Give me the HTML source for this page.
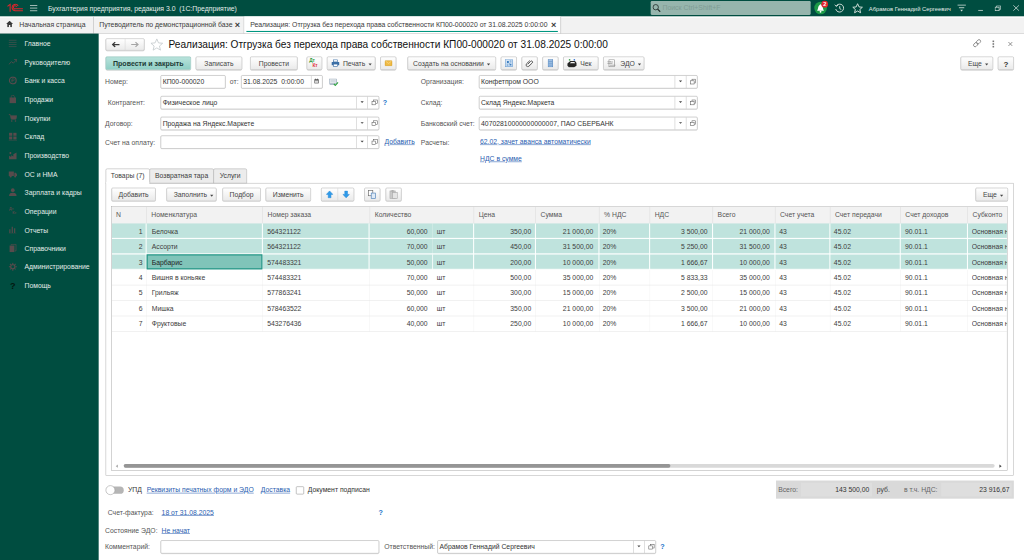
<!DOCTYPE html>
<html lang="ru">
<head>
<meta charset="utf-8">
<title>Реализация: Отгрузка без перехода права собственности КП00-000020</title>
<style>
html,body{margin:0;padding:0;background:#fff;overflow:hidden;width:1024px;height:560px}
#root{position:absolute;left:0;top:0;width:1920px;height:1050px;transform:scale(0.533333);transform-origin:0 0;
 font-family:"Liberation Sans",Arial,sans-serif;font-size:12.800px;color:#333;background:#fff;overflow:hidden}
#root *{box-sizing:border-box}
.a{position:absolute;white-space:nowrap}
/* top bar */
#top{left:0;top:0;width:1920px;height:30.700px;background:#004d40}
#top .t{color:#e3ece8;line-height:32px;top:0;font-size:12.870px}
#search{left:1220px;top:2px;width:300px;height:25.5px;background:#96b5ad;border-radius:2px}
#search span{left:22px;top:0;line-height:25px;color:#7f9c94;font-size:13px}
/* tabs */
#tabs{left:0;top:30.700px;width:1920px;height:32.300px;background:linear-gradient(#fff 0,#fff 1.500px,#f2f2f2 2.500px);border-bottom:1px solid #bcbcbc}
#tabs .t{top:0;line-height:30.500px;color:#3a3a3a;font-size:12.870px}
#tabs .sep{top:0;width:1px;height:32px;background:#b4b4b4}
#tabs .x{top:0;line-height:31.500px;font-size:17px;color:#3a3a3a;font-weight:bold}
#acttab{left:458px;top:0;width:593px;height:31.300px;background:#fff}
#acttab i{position:absolute;left:4px;top:27.500px;width:584px;height:2px;background:#009680}
/* sidebar */
#side{left:0;top:63px;width:185px;height:987px;background:#004d40}
#side .i{left:46px;color:#e3ece8;line-height:16px}
#side svg{position:absolute;left:16.300px;margin-top:-1.200px}
/* form */
.lbl{color:#555;line-height:24px}
.inp{height:25px;border:1px solid #a9a9a9;border-radius:2.500px;background:#fff;line-height:23px;padding-left:3px;color:#333;box-shadow:0 1px 1px rgba(0,0,0,.08)}
.inp .d{position:absolute;top:0;height:23px;width:1px;background:#c4c4c4}
.inp .dd,.inp .op{position:absolute;top:0;height:23px;width:21px;border-left:1px solid #c4c4c4}
.inp .dd:after{content:"";position:absolute;left:7px;top:9px;border-left:3px solid transparent;border-right:3px solid transparent;border-top:3.5px solid #444}
.inp .op:before{content:"";position:absolute;left:10px;top:6px;width:5.800px;height:5.800px;border:1.200px solid #555}
.inp .op:after{content:"";position:absolute;left:7.300px;top:8.700px;width:5.800px;height:5.800px;border:1.200px solid #555;background:#fff}
.btn{height:24.500px;border:1px solid #b2b2b2;border-radius:2.500px;background:linear-gradient(#ffffff,#eaeaea);line-height:25px;text-align:center;color:#444;box-shadow:0 1px 1px rgba(0,0,0,.22)}
.lnk{color:#2a5db0;text-decoration:underline;line-height:24px}
.q{color:#1a73c9;font-weight:bold;line-height:24px;font-size:13.500px}
.arr{display:inline-block;width:0;height:0;border-left:3px solid transparent;border-right:3px solid transparent;border-top:4px solid #444;vertical-align:middle;margin-left:6px}
.ptab{height:28px;line-height:26px;text-align:center;background:#ececec;border:1px solid #aeaeae;border-radius:3px 3px 0 0;color:#3c3c3c}
.ptab.on{background:#fff;height:28px}
.ptab.on:after{content:"";position:absolute;left:0;right:0;bottom:-2px;height:4px;background:#fff}
/* table */
.th{top:388px;height:31px;line-height:29px;color:#555;padding-left:8.500px;border-left:1px solid #dcdcdc;background:#f2f2f2}
.row{left:210px;width:1678px;height:29px}
.row.s{background:#bfe3dd}
.c{top:0;height:29px;line-height:29.500px;color:#3c3c3c}
.r{text-align:right}
</style>
</head>
<body>
<div id="root">

<!-- TOP BAR -->
<div id="top" class="a">
  <svg class="a" style="left:11.500px;top:6px" width="32" height="18" viewBox="0 0 32 18"><g fill="none" stroke="#d8262c" stroke-width="2"><path d="M2 6 L7 2 V16"/><path d="M22 5 A6 6 0 1 0 17 14 H31"/><path d="M19 7 A3 3 0 1 0 17 10.5 H31"/></g></svg>
  <svg class="a" style="left:56px;top:9px" width="15" height="14" viewBox="0 0 15 14"><path d="M0 1.300H14M0 6.200H14M0 11.100H14" stroke="#c9d8d3" stroke-width="1.500"/></svg>
  <div class="a t" style="left:90px">Бухгалтерия предприятия, редакция 3.0&nbsp;&nbsp;(1С:Предприятие)</div>
  <div id="search" class="a">
    <svg class="a" style="left:3px;top:5px" width="16" height="16" viewBox="0 0 16 16"><circle cx="6.500" cy="6.500" r="5" fill="none" stroke="#1f2a27" stroke-width="1.500"/><path d="M10 10L15 15" stroke="#1f2a27" stroke-width="2.200"/></svg>
    <span class="a">Поиск Ctrl+Shift+F</span>
  </div>
  <svg class="a" style="left:1524px;top:0px" width="34" height="30" viewBox="0 0 34 30"><circle cx="14.600" cy="15" r="11.800" fill="#1c9a48"/><path d="M8 20C10.500 17.500 9.500 11 13 9.500C13 7.500 16 7.500 16 9.500C19.500 11 18.500 17.500 21 20Z" fill="#fff"/><circle cx="14.500" cy="22" r="1.700" fill="#fff"/><circle cx="22.300" cy="7.800" r="6.300" fill="#e3262d"/><text x="22.300" y="11.800" font-size="10.500" font-weight="bold" fill="#fff" text-anchor="middle" font-family="Liberation Sans, sans-serif">2</text></svg>
  <svg class="a" style="left:1564px;top:6px" width="20" height="19" viewBox="0 0 20 19"><g fill="none" stroke="#d5e2dd" stroke-width="1.8"><path d="M4 5 A7.5 7.5 0 1 1 3 11"/><path d="M10.5 5.5V10L13.5 12"/><path d="M1 3 L4 6 L7.5 3.5"/></g></svg>
  <svg class="a" style="left:1597px;top:5px" width="22" height="21" viewBox="0 0 22 21"><path d="M11 2 L13.7 8 L20 8.6 L15.2 12.8 L16.7 19 L11 15.6 L5.3 19 L6.8 12.8 L2 8.6 L8.3 8 Z" fill="none" stroke="#d5e2dd" stroke-width="1.8" stroke-linejoin="round"/></svg>
  <div class="a t" style="left:1629px;font-size:11px">Абрамов Геннадий Сергеевич</div>
  <svg class="a" style="left:1795px;top:8px" width="17" height="15" viewBox="0 0 17 15"><path d="M0 1.500H16M3 6.500H13" stroke="#d5e2dd" stroke-width="1.600"/><path d="M5.500 10.500H10.500L8 13.500Z" fill="#d5e2dd"/></svg>
  <svg class="a" style="left:1834px;top:18px" width="10" height="3" viewBox="0 0 10 3"><path d="M0 1.500H9" stroke="#d5e2dd" stroke-width="1.500"/></svg>
  <svg class="a" style="left:1865px;top:10px" width="12" height="11" viewBox="0 0 12 11"><g fill="none" stroke="#d5e2dd" stroke-width="1.300"><rect x="0.800" y="3.500" width="7.500" height="6.500"/><path d="M3.500 3.500V1H11.200V7.500H8.500"/></g></svg>
  <svg class="a" style="left:1899px;top:9px" width="13" height="12" viewBox="0 0 13 12"><path d="M1 1L11.500 11M11.500 1L1 11" stroke="#d5e2dd" stroke-width="1.400"/></svg>
</div>

<!-- TAB BAR -->
<div id="tabs" class="a">
  <svg class="a" style="left:10.500px;top:8.700px" width="14" height="12" viewBox="0 0 15 14"><path d="M7.5 0 L15 7 H12.5 V14 H9 V9 H6 V14 H2.5 V7 H0 Z" fill="#383838"/></svg>
  <div class="a t" style="left:36px">Начальная страница</div>
  <div class="a sep" style="left:175px"></div>
  <div class="a t" style="left:186px">Путеводитель по демонстрационной базе</div>
  <div class="a x" style="left:440px">×</div>
  <div class="a sep" style="left:457px"></div>
  <div id="acttab" class="a"><i></i></div>
  <div class="a t" style="left:469px">Реализация: Отгрузка без перехода права собственности КП00-000020 от 31.08.2025 0:00:00</div>
  <div class="a x" style="left:1033px">×</div>
  <div class="a sep" style="left:1051px"></div>
</div>

<!-- SIDEBAR -->
<div id="side" class="a">
  <svg style="top:11.0px" width="16" height="16" viewBox="0 0 16 16"><path d="M0 2.500H15M0 6.500H15M0 10.500H15M0 14.500H15" stroke="#7a565a" stroke-width="0.800"/></svg>
  <div class="a i" style="top:11.0px">Главное</div>
  <svg style="top:46.0px" width="16" height="16" viewBox="0 0 16 16"><path d="M0.500 13L5.500 7.500L9 10.500L15 4M10.500 3.500H15.500V8.500" fill="none" stroke="#574b4c" stroke-width="1.6"/></svg>
  <div class="a i" style="top:46.0px">Руководителю</div>
  <svg style="top:80.9px" width="16" height="16" viewBox="0 0 16 16"><circle cx="8" cy="8" r="6.300" fill="none" stroke="#574b4c" stroke-width="2.200"/><path d="M6.500 11.500V4.800H9A1.800 1.800 0 0 1 9 8.400H5.500" fill="none" stroke="#574b4c" stroke-width="1.400"/></svg>
  <div class="a i" style="top:80.9px">Банк и касса</div>
  <svg style="top:115.9px" width="16" height="16" viewBox="0 0 16 16"><path d="M2 5H14V15.500H2Z" fill="#574b4c"/><path d="M5 7V3.500A3 3 0 0 1 11 3.500V7" fill="none" stroke="#574b4c" stroke-width="1.300"/></svg>
  <div class="a i" style="top:115.9px">Продажи</div>
  <svg style="top:150.8px" width="16" height="16" viewBox="0 0 16 16"><path d="M0 1.500H3L5 10.500H14L15.500 4H4" fill="#574b4c" stroke="#574b4c" stroke-width="1.2"/><circle cx="6" cy="13.800" r="1.500" fill="#574b4c"/><circle cx="13" cy="13.800" r="1.500" fill="#574b4c"/></svg>
  <div class="a i" style="top:150.8px">Покупки</div>
  <svg style="top:185.7px" width="16" height="16" viewBox="0 0 16 16"><path d="M1 1H7V6.500H1ZM9 1H15V6.500H9ZM1 8H7V13.500H1ZM9 8H15V13.500H9ZM0 15H16V16H0Z" fill="#574b4c"/></svg>
  <div class="a i" style="top:185.7px">Склад</div>
  <svg style="top:220.7px" width="16" height="16" viewBox="0 0 16 16"><path d="M1 16V9L5 11.500V8L9 10.500V6L15 3V16Z" fill="#574b4c"/><rect x="2" y="2" width="3" height="4" fill="#574b4c"/></svg>
  <div class="a i" style="top:220.7px">Производство</div>
  <svg style="top:255.7px" width="16" height="16" viewBox="0 0 16 16"><path d="M0 3.500H10V12H0Z" fill="#574b4c"/><path d="M11 6H14L16 9V12H11Z" fill="#574b4c"/><circle cx="4" cy="13" r="2" fill="#574b4c"/><circle cx="12.500" cy="13" r="2" fill="#574b4c"/></svg>
  <div class="a i" style="top:255.7px">ОС и НМА</div>
  <svg style="top:290.6px" width="16" height="16" viewBox="0 0 16 16"><circle cx="8" cy="4.500" r="3.500" fill="#574b4c"/><path d="M1 15.500C1 10.500 5 9.500 8 9.500C11 9.500 15 10.500 15 15.500Z" fill="#574b4c"/></svg>
  <div class="a i" style="top:290.6px">Зарплата и кадры</div>
  <svg style="top:325.5px" width="16" height="16" viewBox="0 0 16 16"><text x="1" y="7" font-size="7" font-weight="bold" fill="#574b4c" font-family="Liberation Sans, sans-serif">Дт</text><text x="7" y="15" font-size="7" font-weight="bold" fill="#574b4c" font-family="Liberation Sans, sans-serif">Кт</text></svg>
  <div class="a i" style="top:325.5px">Операции</div>
  <svg style="top:360.5px" width="16" height="16" viewBox="0 0 16 16"><path d="M2.500 15V8M7 15V3M11.500 15V6" stroke="#574b4c" stroke-width="2.200"/><path d="M0 15.500H15" stroke="#574b4c" stroke-width="1"/></svg>
  <div class="a i" style="top:360.5px">Отчеты</div>
  <svg style="top:395.5px" width="16" height="16" viewBox="0 0 16 16"><path d="M2 3.500H11V16H2Z" fill="#574b4c"/><path d="M5 3V1H14V13.500H12" fill="none" stroke="#574b4c" stroke-width="1.400"/></svg>
  <div class="a i" style="top:395.5px">Справочники</div>
  <svg style="top:430.4px" width="16" height="16" viewBox="0 0 16 16"><circle cx="8" cy="8" r="4" fill="none" stroke="#574b4c" stroke-width="2.400"/><path d="M8 0.500V3M8 13V15.500M0.500 8H3M13 8H15.500M2.700 2.700L4.500 4.500M11.500 11.500L13.300 13.300M2.700 13.300L4.500 11.500M11.500 4.500L13.300 2.700" stroke="#574b4c" stroke-width="2"/></svg>
  <div class="a i" style="top:430.4px">Администрирование</div>
  <svg style="top:465.4px" width="16" height="16" viewBox="0 0 16 16"><text x="8" y="14.500" font-size="17" font-weight="bold" fill="#03180f" text-anchor="middle" font-family="Liberation Sans, sans-serif">?</text></svg>
  <div class="a i" style="top:465.4px">Помощь</div>
</div>

<!-- FORM -->
<div id="form" class="a" style="left:0;top:0;width:1920px;height:1050px">
  <!-- header line -->
  <div class="a btn" style="left:198px;top:72px;width:73px;height:22.500px"></div>
  <div class="a" style="left:234px;top:73px;width:1px;height:22px;background:#d4d4d4"></div>
  <svg class="a" style="left:209px;top:78px" width="16" height="11" viewBox="0 0 16 11"><path d="M15 5.500H3M7 1L2.200 5.500L7 10" fill="none" stroke="#3a3a3a" stroke-width="2.400"/></svg>
  <svg class="a" style="left:245px;top:78px" width="16" height="11" viewBox="0 0 16 11"><path d="M1 5.500H13M9 1L13.800 5.500L9 10" fill="none" stroke="#a5a5a5" stroke-width="2.200"/></svg>
  <svg class="a" style="left:281px;top:71px" width="26" height="25" viewBox="0 0 26 25"><path d="M13 2 L16.2 9.4 L24 10.1 L18 15.3 L19.9 23 L13 18.8 L6.1 23 L8 15.3 L2 10.1 L9.8 9.4 Z" fill="#fff" stroke="#c3c9cc" stroke-width="1.5" stroke-linejoin="round"/></svg>
  <div class="a" id="title" style="left:316px;top:70px;font-size:19px;line-height:28px;color:#111">Реализация: Отгрузка без перехода права собственности КП00-000020 от 31.08.2025 0:00:00</div>
  <svg class="a" style="left:1823px;top:72px" width="18" height="18" viewBox="0 0 18 18"><g fill="none" stroke="#808080" stroke-width="1.500" transform="rotate(-45 9 9)"><rect x="0.800" y="6" width="9" height="6" rx="3"/><rect x="8.200" y="6" width="9" height="6" rx="3"/></g></svg>
  <div class="a" style="left:1861px;top:76px;width:3px;height:3px;background:#777"></div>
  <div class="a" style="left:1861px;top:81px;width:3px;height:3px;background:#777"></div>
  <div class="a" style="left:1861px;top:86px;width:3px;height:3px;background:#777"></div>
  <svg class="a" style="left:1890px;top:78px" width="9" height="9" viewBox="0 0 9 9"><path d="M0.800 0.800L8.200 8.200M8.200 0.800L0.800 8.200" stroke="#707070" stroke-width="1.400"/></svg>

  <!-- command bar -->
  <div class="a btn" style="left:198px;top:106px;width:160px;background:linear-gradient(#b9e3dc,#8fcfc5);border-color:#6fb3a8;color:#1d3b36;font-weight:bold;font-size:13.200px">Провести и закрыть</div>
  <div class="a btn" style="left:367px;top:106px;width:87px">Записать</div>
  <div class="a btn" style="left:469px;top:106px;width:89px">Провести</div>
  <div class="a btn" style="left:575px;top:106px;width:29px"></div>
  <div class="a" style="left:580px;top:109px;font-size:9px;font-weight:bold;color:#2e9e3e;line-height:10px;letter-spacing:-.5px">Дт</div>
  <div class="a" style="left:586px;top:116.500px;font-size:9px;font-weight:bold;color:#e0343a;line-height:10px;letter-spacing:-.5px">Кт</div>
  <div class="a btn" style="left:613px;top:106px;width:91px;text-align:left;padding-left:29px">Печать<i class="arr"></i></div>
  <svg class="a" style="left:621px;top:110.500px" width="16" height="15" viewBox="0 0 20 18"><rect x="5" y="1" width="10" height="5" fill="#fff" stroke="#3b6ea5" stroke-width="1.500"/><rect x="1" y="6" width="18" height="8" rx="1.500" fill="#3b6ea5"/><rect x="5" y="11" width="10" height="6" fill="#fff" stroke="#3b6ea5" stroke-width="1.500"/></svg>
  <div class="a btn" style="left:713px;top:106px;width:30px"></div>
  <svg class="a" style="left:720.500px;top:112.500px" width="15" height="11" viewBox="0 0 17 13"><rect x="0.800" y="0.800" width="15.400" height="11.400" rx="1" fill="#f0bb45" stroke="#d29a1c" stroke-width="1.400"/><path d="M1.500 1.500L8.500 7L15.500 1.500" fill="none" stroke="#fbe4a6" stroke-width="1.200"/></svg>
  <div class="a btn" style="left:764px;top:106px;width:166px">Создать на основании<i class="arr"></i></div>
  <div class="a btn" style="left:939px;top:106px;width:30px"></div>
  <svg class="a" style="left:946.500px;top:110.500px" width="15" height="15" viewBox="0 0 17 17"><rect x="1" y="1" width="15" height="15" fill="#d3e4f5" stroke="#5b93cd" stroke-width="1.200"/><path d="M4 4H8V8H4ZM9.500 9.500H13.500V13.500H9.500Z" fill="#3f7fc0"/><path d="M10 3.500H13.500M10 6H13.500M3.500 10.500H7M3.500 13H7M8 8L9.500 9.500" stroke="#3f7fc0" stroke-width="1.200"/></svg>
  <div class="a btn" style="left:978px;top:106px;width:30px"></div>
  <svg class="a" style="left:985px;top:111px" width="16" height="15" viewBox="0 0 16 15"><path d="M4.500 9.500L10 4A2 2 0 0 1 13 7L6.500 13.300A3.200 3.200 0 0 1 2 8.800L8.500 2.500" fill="none" stroke="#505050" stroke-width="1.800"/></svg>
  <div class="a btn" style="left:1017px;top:106px;width:30px"></div>
  <svg class="a" style="left:1027px;top:110.500px" width="10" height="15" viewBox="0 0 10 15"><rect x="0.600" y="0.600" width="8.800" height="13.800" fill="#a9c8ea" stroke="#4a7fb8" stroke-width="1.200"/><path d="M1.500 4H8.500M1.500 7.500H8.500M1.500 11H8.500" stroke="#4a7fb8" stroke-width="1.100"/></svg>
  <div class="a btn" style="left:1056px;top:106px;width:66px;text-align:left;padding-left:31px">Чек</div>
  <svg class="a" style="left:1061.500px;top:110px" width="20" height="17" viewBox="0 0 22 19"><path d="M2 10L8 5H18L21 9V15L16 18H5L2 15Z" fill="#262626"/><path d="M7 9.500L9.500 7H16.500L18 9.500Z" fill="#f4f4f4"/><rect x="5" y="1" width="3" height="3" fill="#2f9e44"/><rect x="15" y="1" width="3" height="3" fill="#2f6fd0"/></svg>
  <div class="a btn" style="left:1131px;top:106px;width:77px;text-align:left;padding-left:31px">ЭДО<i class="arr"></i></div>
  <svg class="a" style="left:1137.500px;top:110.500px" width="17" height="16" viewBox="0 0 18 17"><g fill="none" stroke="#8a8a8a" stroke-width="1.2"><rect x="4" y="1" width="11" height="14"/><path d="M1 5H8M1 8.5H11M6 12H17M6.500 5.500H12"/></g></svg>
  <div class="a btn" style="left:1801px;top:106px;width:61px;padding-left:5px">Еще<i class="arr"></i></div>
  <div class="a btn" style="left:1871px;top:106px;width:30px;font-weight:bold;color:#333;font-size:15px">?</div>
  <!-- fields left -->
  <div class="a lbl" style="left:197px;top:142px">Номер:</div>
  <div class="a inp" style="left:301px;top:141px;width:122px">КП00-000020</div>
  <div class="a lbl" style="left:431px;top:142px">от:</div>
  <div class="a inp" style="left:452px;top:141px;width:153px">31.08.2025&nbsp;&nbsp;0:00:00<i class="d" style="left:130px"></i></div>
  <svg class="a" style="left:589px;top:147px" width="9" height="10" viewBox="0 0 12 13"><rect x="0.500" y="2" width="11" height="10.500" fill="#444"/><rect x="2" y="5" width="8" height="6" fill="#d9d9d9"/><rect x="2.500" y="0" width="2" height="3" fill="#444"/><rect x="7.500" y="0" width="2" height="3" fill="#444"/></svg>
  <svg class="a" style="left:617px;top:146.500px" width="18" height="15" viewBox="0 0 20 17"><rect x="1" y="1" width="15" height="10" fill="#e6eaee" stroke="#8fa0b3" stroke-width="1.2"/><path d="M3 4H14M3 7H14" stroke="#b7c2ce" stroke-width="1"/><path d="M1 13H12" stroke="#8fa0b3" stroke-width="1.5"/><path d="M10 11.500L13 15L19 8.500" fill="none" stroke="#2fa341" stroke-width="2.4"/></svg>

  <div class="a lbl" style="left:202px;top:181px">Контрагент:</div>
  <div class="a inp" style="left:301px;top:180px;width:410px">Физическое лицо<i class="dd" style="left:366px"></i><i class="op" style="left:387px"></i></div>
  <div class="a q" style="left:717.500px;top:180px">?</div>

  <div class="a lbl" style="left:197px;top:220px">Договор:</div>
  <div class="a inp" style="left:301px;top:219px;width:410px">Продажа на Яндекс.Маркете<i class="dd" style="left:366px"></i><i class="op" style="left:387px"></i></div>

  <div class="a lbl" style="left:197px;top:255px">Счет на оплату:</div>
  <div class="a inp" style="left:301px;top:254px;width:410px"><i class="dd" style="left:366px"></i><i class="op" style="left:387px"></i></div>
  <div class="a lnk" style="left:721px;top:254px">Добавить</div>

  <!-- fields right -->
  <div class="a lbl" style="left:789px;top:142px">Организация:</div>
  <div class="a inp" style="left:898px;top:141px;width:410px">Конфетпром ООО<i class="dd" style="left:366px"></i><i class="op" style="left:387px"></i></div>
  <div class="a lbl" style="left:789px;top:181px">Склад:</div>
  <div class="a inp" style="left:898px;top:180px;width:410px">Склад Яндекс.Маркета<i class="dd" style="left:366px"></i><i class="op" style="left:387px"></i></div>
  <div class="a lbl" style="left:789px;top:220px">Банковский счет:</div>
  <div class="a inp" style="left:898px;top:219px;width:410px">40702810000000000007, ПАО СБЕРБАНК<i class="dd" style="left:366px"></i><i class="op" style="left:387px"></i></div>
  <div class="a lbl" style="left:789px;top:255px">Расчеты:</div>
  <div class="a lnk" style="left:900px;top:254px">62.02, зачет аванса автоматически</div>
  <div class="a lnk" style="left:900px;top:286px">НДС в сумме</div>
  <!-- page tabs -->
  <div class="a" style="left:198px;top:343px;width:1703px;height:549px;border:1px solid #b4b4b4;background:#fff"></div>
  <div class="a ptab" style="left:280px;top:316px;width:121px">Возвратная тара</div>
  <div class="a ptab" style="left:400px;top:316px;width:63px">Услуги</div>
  <div class="a ptab on" style="left:198px;top:316px;width:83px">Товары (7)</div>

  <!-- table toolbar -->
  <div class="a btn" style="left:209px;top:352px;width:83px">Добавить</div>
  <div class="a btn" style="left:312px;top:352px;width:94px;padding-left:8px">Заполнить<i class="arr"></i></div>
  <div class="a btn" style="left:417px;top:352px;width:72px">Подбор</div>
  <div class="a btn" style="left:498px;top:352px;width:84.500px">Изменить</div>
  <div class="a btn" style="left:602px;top:352px;width:62px"></div>
  <div class="a" style="left:633px;top:353px;width:1px;height:23px;background:#d0d0d0"></div>
  <svg class="a" style="left:611px;top:357px" width="14" height="15" viewBox="0 0 14 15"><path d="M7 1L13 7.500H9.500V14H4.500V7.500H1Z" fill="#2f9bea" stroke="#2287d6" stroke-width="1"/></svg>
  <svg class="a" style="left:642px;top:357px" width="14" height="15" viewBox="0 0 14 15"><path d="M7 14L13 7.500H9.500V1H4.500V7.500H1Z" fill="#2f9bea" stroke="#2287d6" stroke-width="1"/></svg>
  <div class="a btn" style="left:683px;top:352px;width:30px"></div>
  <svg class="a" style="left:690px;top:356px" width="16" height="17" viewBox="0 0 16 17"><rect x="1" y="1" width="8" height="10" fill="#fff" stroke="#666" stroke-width="1.2"/><rect x="6" y="6" width="8" height="10" fill="#dfeaf6" stroke="#4a7fb8" stroke-width="1.2"/></svg>
  <div class="a btn" style="left:723px;top:352px;width:30px"></div>
  <svg class="a" style="left:730px;top:356px" width="16" height="17" viewBox="0 0 16 17"><rect x="1" y="2" width="10" height="14" fill="#c9c9c9" stroke="#aaa" stroke-width="1.2"/><rect x="6" y="5" width="9" height="11" fill="#e4e4e4" stroke="#aaa" stroke-width="1.2"/><rect x="4" y="0.500" width="4" height="3" fill="#aaa"/></svg>
  <div class="a btn" style="left:1829px;top:352px;width:61px;padding-left:5px">Еще<i class="arr"></i></div>

  <!-- table -->
  <div class="a" style="left:209px;top:387px;width:1680px;height:496px;border:1px solid #adadad;background:#fff"></div>
  <div class="a" style="left:210px;top:388px;width:1678px;height:31px;background:#f2f2f2;border-bottom:1px solid #dcdcdc"></div>
  <div class="a th" style="left:210px;width:64px;border-left:0;padding-left:7.500px">N</div>
  <div class="a th" style="left:274px;width:218px">Номенклатура</div>
  <div class="a th" style="left:492px;width:201px">Номер заказа</div>
  <div class="a th" style="left:693px;width:195px">Количество</div>
  <div class="a th" style="left:888px;width:116px">Цена</div>
  <div class="a th" style="left:1004px;width:119px">Сумма</div>
  <div class="a th" style="left:1123px;width:95px">% НДС</div>
  <div class="a th" style="left:1218px;width:118px">НДС</div>
  <div class="a th" style="left:1336px;width:117px">Всего</div>
  <div class="a th" style="left:1453px;width:103px">Счет учета</div>
  <div class="a th" style="left:1556px;width:132px">Счет передачи</div>
  <div class="a th" style="left:1688px;width:126px">Счет доходов</div>
  <div class="a th" style="left:1814px;width:74px">Субконто</div>
  <div class="a row s" style="top:419px"><div class="a c r" style="left:0;width:57.500px">1</div><div class="a c" style="left:74.500px">Белочка</div><div class="a c" style="left:291px">564321122</div><div class="a c r" style="left:483px;width:108.600px">60,000</div><div class="a c" style="left:609px">шт</div><div class="a c r" style="left:678px;width:108px">350,00</div><div class="a c r" style="left:794px;width:108.300px">21 000,00</div><div class="a c" style="left:920px">20%</div><div class="a c r" style="left:1008px;width:108.600px">3 500,00</div><div class="a c r" style="left:1126px;width:107.600px">21 000,00</div><div class="a c" style="left:1251px">43</div><div class="a c" style="left:1353.500px">45.02</div><div class="a c" style="left:1487px">90.01.1</div><div class="a c" style="left:1612px;width:66px;overflow:hidden">Основная номенклатурная группа</div></div>
  <div class="a row s" style="top:448px"><div class="a c r" style="left:0;width:57.500px">2</div><div class="a c" style="left:74.500px">Ассорти</div><div class="a c" style="left:291px">564321122</div><div class="a c r" style="left:483px;width:108.600px">70,000</div><div class="a c" style="left:609px">шт</div><div class="a c r" style="left:678px;width:108px">450,00</div><div class="a c r" style="left:794px;width:108.300px">31 500,00</div><div class="a c" style="left:920px">20%</div><div class="a c r" style="left:1008px;width:108.600px">5 250,00</div><div class="a c r" style="left:1126px;width:107.600px">31 500,00</div><div class="a c" style="left:1251px">43</div><div class="a c" style="left:1353.500px">45.02</div><div class="a c" style="left:1487px">90.01.1</div><div class="a c" style="left:1612px;width:66px;overflow:hidden">Основная номенклатурная группа</div></div>
  <div class="a row s" style="top:477px"><div class="a c r" style="left:0;width:57.500px">3</div><div class="a c" style="left:74.500px">Барбарис</div><div class="a c" style="left:291px">574483321</div><div class="a c r" style="left:483px;width:108.600px">50,000</div><div class="a c" style="left:609px">шт</div><div class="a c r" style="left:678px;width:108px">200,00</div><div class="a c r" style="left:794px;width:108.300px">10 000,00</div><div class="a c" style="left:920px">20%</div><div class="a c r" style="left:1008px;width:108.600px">1 666,67</div><div class="a c r" style="left:1126px;width:107.600px">10 000,00</div><div class="a c" style="left:1251px">43</div><div class="a c" style="left:1353.500px">45.02</div><div class="a c" style="left:1487px">90.01.1</div><div class="a c" style="left:1612px;width:66px;overflow:hidden">Основная номенклатурная группа</div></div>
  <div class="a row" style="top:506px"><div class="a c r" style="left:0;width:57.500px">4</div><div class="a c" style="left:74.500px">Вишня в коньяке</div><div class="a c" style="left:291px">574483321</div><div class="a c r" style="left:483px;width:108.600px">70,000</div><div class="a c" style="left:609px">шт</div><div class="a c r" style="left:678px;width:108px">500,00</div><div class="a c r" style="left:794px;width:108.300px">35 000,00</div><div class="a c" style="left:920px">20%</div><div class="a c r" style="left:1008px;width:108.600px">5 833,33</div><div class="a c r" style="left:1126px;width:107.600px">35 000,00</div><div class="a c" style="left:1251px">43</div><div class="a c" style="left:1353.500px">45.02</div><div class="a c" style="left:1487px">90.01.1</div><div class="a c" style="left:1612px;width:66px;overflow:hidden">Основная номенклатурная группа</div></div>
  <div class="a row" style="top:535px"><div class="a c r" style="left:0;width:57.500px">5</div><div class="a c" style="left:74.500px">Грильяж</div><div class="a c" style="left:291px">577863241</div><div class="a c r" style="left:483px;width:108.600px">50,000</div><div class="a c" style="left:609px">шт</div><div class="a c r" style="left:678px;width:108px">300,00</div><div class="a c r" style="left:794px;width:108.300px">15 000,00</div><div class="a c" style="left:920px">20%</div><div class="a c r" style="left:1008px;width:108.600px">2 500,00</div><div class="a c r" style="left:1126px;width:107.600px">15 000,00</div><div class="a c" style="left:1251px">43</div><div class="a c" style="left:1353.500px">45.02</div><div class="a c" style="left:1487px">90.01.1</div><div class="a c" style="left:1612px;width:66px;overflow:hidden">Основная номенклатурная группа</div></div>
  <div class="a row" style="top:564px"><div class="a c r" style="left:0;width:57.500px">6</div><div class="a c" style="left:74.500px">Мишка</div><div class="a c" style="left:291px">578463522</div><div class="a c r" style="left:483px;width:108.600px">60,000</div><div class="a c" style="left:609px">шт</div><div class="a c r" style="left:678px;width:108px">350,00</div><div class="a c r" style="left:794px;width:108.300px">21 000,00</div><div class="a c" style="left:920px">20%</div><div class="a c r" style="left:1008px;width:108.600px">3 500,00</div><div class="a c r" style="left:1126px;width:107.600px">21 000,00</div><div class="a c" style="left:1251px">43</div><div class="a c" style="left:1353.500px">45.02</div><div class="a c" style="left:1487px">90.01.1</div><div class="a c" style="left:1612px;width:66px;overflow:hidden">Основная номенклатурная группа</div></div>
  <div class="a row" style="top:593px"><div class="a c r" style="left:0;width:57.500px">7</div><div class="a c" style="left:74.500px">Фруктовые</div><div class="a c" style="left:291px">543276436</div><div class="a c r" style="left:483px;width:108.600px">40,000</div><div class="a c" style="left:609px">шт</div><div class="a c r" style="left:678px;width:108px">250,00</div><div class="a c r" style="left:794px;width:108.300px">10 000,00</div><div class="a c" style="left:920px">20%</div><div class="a c r" style="left:1008px;width:108.600px">1 666,67</div><div class="a c r" style="left:1126px;width:107.600px">10 000,00</div><div class="a c" style="left:1251px">43</div><div class="a c" style="left:1353.500px">45.02</div><div class="a c" style="left:1487px">90.01.1</div><div class="a c" style="left:1612px;width:66px;overflow:hidden">Основная номенклатурная группа</div></div>
  <i class="a" style="left:272.8px;top:419px;width:2.400px;height:87px;background:#fbfefd"></i>
  <i class="a" style="left:274px;top:506px;width:1px;height:116px;background:#f2f2f2"></i>
  <i class="a" style="left:490.8px;top:419px;width:2.400px;height:87px;background:#fbfefd"></i>
  <i class="a" style="left:492px;top:506px;width:1px;height:116px;background:#f2f2f2"></i>
  <i class="a" style="left:690.8px;top:419px;width:2.400px;height:87px;background:#fbfefd"></i>
  <i class="a" style="left:692px;top:506px;width:1px;height:116px;background:#f2f2f2"></i>
  <i class="a" style="left:810px;top:419px;width:2px;height:58px;background:rgba(255,255,255,.22)"></i>
  <i class="a" style="left:810px;top:477px;width:2px;height:29px;background:#eef8f6"></i>
  <i class="a" style="left:886.8px;top:419px;width:2.400px;height:87px;background:#fbfefd"></i>
  <i class="a" style="left:888px;top:506px;width:1px;height:116px;background:#f2f2f2"></i>
  <i class="a" style="left:1002.8px;top:419px;width:2.400px;height:87px;background:#fbfefd"></i>
  <i class="a" style="left:1004px;top:506px;width:1px;height:116px;background:#f2f2f2"></i>
  <i class="a" style="left:1121.8px;top:419px;width:2.400px;height:87px;background:#fbfefd"></i>
  <i class="a" style="left:1123px;top:506px;width:1px;height:116px;background:#f2f2f2"></i>
  <i class="a" style="left:1216.8px;top:419px;width:2.400px;height:87px;background:#fbfefd"></i>
  <i class="a" style="left:1218px;top:506px;width:1px;height:116px;background:#f2f2f2"></i>
  <i class="a" style="left:1334.8px;top:419px;width:2.400px;height:87px;background:#fbfefd"></i>
  <i class="a" style="left:1336px;top:506px;width:1px;height:116px;background:#f2f2f2"></i>
  <i class="a" style="left:1451.8px;top:419px;width:2.400px;height:87px;background:#fbfefd"></i>
  <i class="a" style="left:1453px;top:506px;width:1px;height:116px;background:#f2f2f2"></i>
  <i class="a" style="left:1554.8px;top:419px;width:2.400px;height:87px;background:#fbfefd"></i>
  <i class="a" style="left:1556px;top:506px;width:1px;height:116px;background:#f2f2f2"></i>
  <i class="a" style="left:1686.8px;top:419px;width:2.400px;height:87px;background:#fbfefd"></i>
  <i class="a" style="left:1688px;top:506px;width:1px;height:116px;background:#f2f2f2"></i>
  <i class="a" style="left:1812.8px;top:419px;width:2.400px;height:87px;background:#fbfefd"></i>
  <i class="a" style="left:1814px;top:506px;width:1px;height:116px;background:#f2f2f2"></i>
  <i class="a" style="left:210px;top:445.7px;width:1678px;height:2.500px;background:#fff"></i>
  <i class="a" style="left:210px;top:474.7px;width:1678px;height:2.500px;background:#fff"></i>
  <i class="a" style="left:210px;top:503.7px;width:1678px;height:2.500px;background:#fff"></i>
  <i class="a" style="left:210px;top:534px;width:1678px;height:1px;background:#e4e4e4"></i>
  <i class="a" style="left:210px;top:563px;width:1678px;height:1px;background:#e4e4e4"></i>
  <i class="a" style="left:210px;top:592px;width:1678px;height:1px;background:#e4e4e4"></i>
  <i class="a" style="left:210px;top:621px;width:1678px;height:1px;background:#e4e4e4"></i>
  <div class="a" style="left:275px;top:477px;width:217px;height:28px;background:#80c4b9;border:2px solid #1f9484;line-height:25.500px;padding-left:7.500px;color:#222">Барбарис</div>
  <!-- scrollbar -->
  <div class="a" style="left:232px;top:869.500px;width:1633px;height:7.500px;border-radius:4px;background:#d9d9d9"></div>
  <div class="a" style="left:232px;top:869.500px;width:1025px;height:7.500px;border-radius:4px;background:#959595"></div>
  <div class="a" style="left:217px;top:871px;border-top:3px solid transparent;border-bottom:3px solid transparent;border-right:4px solid #aaa"></div>
  <div class="a" style="left:1874px;top:871px;border-top:3px solid transparent;border-bottom:3px solid transparent;border-left:4px solid #444"></div>
  <!-- footer -->
  <div class="a" style="left:199px;top:912px;width:33px;height:14px;border-radius:7px;background:#b5b5b5"></div>
  <div class="a" style="left:198px;top:910px;width:18px;height:18px;border-radius:9px;background:#fff;border:1px solid #9a9a9a"></div>
  <div class="a lbl" style="left:240px;top:907px;color:#333">УПД</div>
  <div class="a lnk" style="left:275px;top:907px">Реквизиты печатных форм и ЭДО</div>
  <div class="a lnk" style="left:489px;top:907px">Доставка</div>
  <div class="a" style="left:555px;top:912px;width:15px;height:15px;border:1px solid #8f8f8f;border-radius:2px;background:#fff"></div>
  <div class="a lbl" style="left:577px;top:907px;color:#333">Документ подписан</div>
  <div class="a" style="left:1455px;top:901px;width:1447px;width:446px;height:34px;background:#d9d9d9"></div>
  <div class="a" style="left:1502px;top:905px;width:133px;height:26px;background:#dedede"></div>
  <div class="a" style="left:1765px;top:905px;width:132px;height:26px;background:#dedede"></div>
  <div class="a lbl" style="left:1459px;top:906px;color:#666">Всего:</div>
  <div class="a lbl r" style="left:1530px;top:906px;width:100px;color:#333">143 500,00</div>
  <div class="a lbl" style="left:1644px;top:906px;color:#444">руб.</div>
  <div class="a lbl" style="left:1695px;top:906px;color:#666">в т.ч. НДС:</div>
  <div class="a lbl r" style="left:1790px;top:906px;width:103px;color:#333">23 916,67</div>

  <div class="a lbl" style="left:202px;top:949px">Счет-фактура:</div>
  <div class="a lnk" style="left:303px;top:949px">18 от 31.08.2025</div>
  <div class="a q" style="left:709.500px;top:949px">?</div>
  <div class="a lbl" style="left:197px;top:983px">Состояние ЭДО:</div>
  <div class="a lnk" style="left:303px;top:983px">Не начат</div>
  <div class="a lbl" style="left:197px;top:1013px">Комментарий:</div>
  <div class="a inp" style="left:301px;top:1013px;width:410px"></div>
  <div class="a lbl" style="left:720.500px;top:1013px">Ответственный:</div>
  <div class="a inp" style="left:820px;top:1013px;width:410px">Абрамов Геннадий Сергеевич<i class="dd" style="left:366px"></i><i class="op" style="left:387px"></i></div>
  <div class="a q" style="left:1238px;top:1013px">?</div>
</div>

</div>
</body>
</html>
